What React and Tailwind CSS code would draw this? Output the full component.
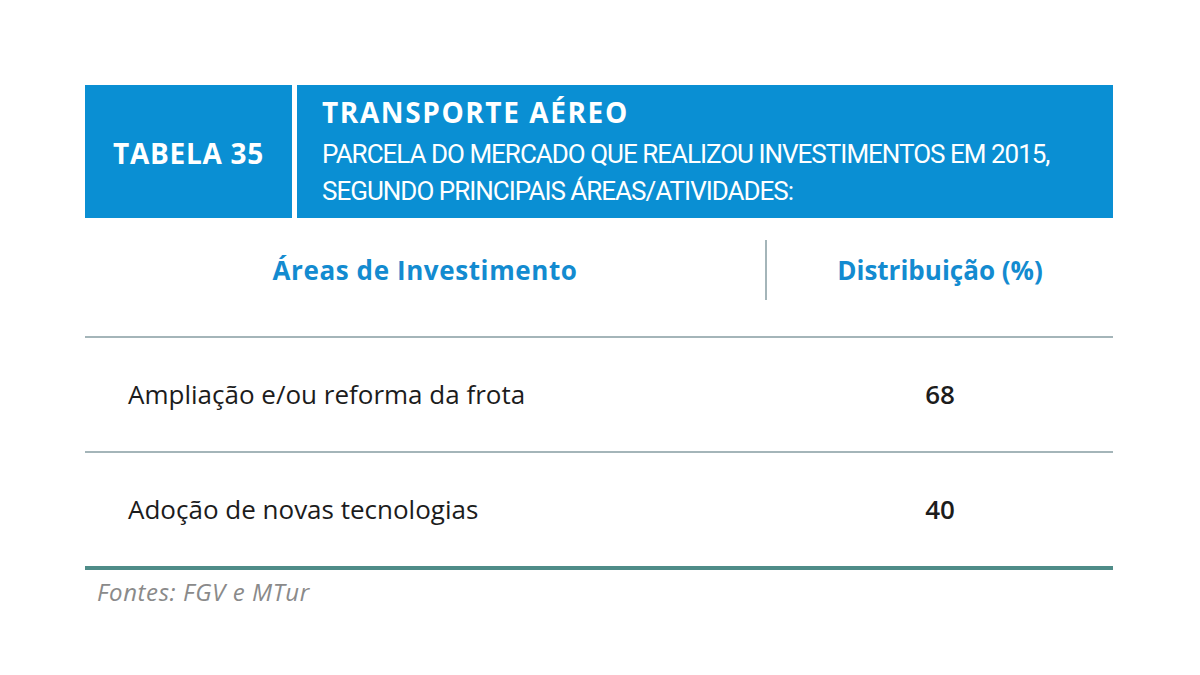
import React from "react";

const rows = [
  { area: "Ampliação e/ou reforma da frota", value: "68" },
  { area: "Adoção de novas tecnologias", value: "40" },
];

const App = () => {
  return (
    <div
      className="w-[1200px] h-[675px] bg-white pt-[85px] pl-[85px]"
      style={{ fontFamily: '"Open Sans", "Noto Sans", sans-serif' }}
    >
      <div className="w-[1028px]">
        {/* faixa azul do título */}
        <div className="flex h-[133px] gap-[5px]">
          <div className="w-[207px] bg-[#0a8fd3] flex items-center justify-center pt-[3px]">
            <span className="text-white font-bold text-[28px] tracking-[0.7px]">
              TABELA 35
            </span>
          </div>
          <div className="flex-1 bg-[#0a8fd3] pl-[25px] pt-[10px] text-white">
            <div className="font-bold text-[28px] leading-[34px] tracking-[1.6px]">
              TRANSPORTE AÉREO
            </div>
            <div
              className="mt-[7px] text-[26px] leading-[37px] tracking-[-1px]"
              style={{ fontFamily: "Roboto, sans-serif" }}
            >
              PARCELA DO MERCADO QUE REALIZOU INVESTIMENTOS EM 2015,
              <br />
              SEGUNDO PRINCIPAIS ÁREAS/ATIVIDADES:
            </div>
          </div>
        </div>

        {/* cabeçalho das colunas */}
        <div className="flex pt-[22px] pb-[36px] border-b-2 border-[#a4b5b9]">
          <div className="w-[682px] h-[60px] flex items-center justify-center border-r-2 border-[#a4b5b9]">
            <span className="text-[#138bd0] font-bold text-[26px] tracking-[0.6px]">
              Áreas de Investimento
            </span>
          </div>
          <div className="flex-1 h-[60px] flex items-center justify-center">
            <span className="text-[#138bd0] font-bold text-[26px]">
              Distribuição (%)
            </span>
          </div>
        </div>

        {rows.map((row, i) => (
          <div
            key={row.area}
            className={
              i === rows.length - 1
                ? "flex items-center h-[117px] border-b-4 border-[#4f8c88]"
                : "flex items-center h-[115px] border-b-2 border-[#a4b5b9]"
            }
          >
            <div className="w-[682px] pl-[43px] text-[26px] font-medium text-[#1c1c1c]">
              {row.area}
            </div>
            <div className="flex-1 text-center text-[26px] font-semibold text-[#1c1c1c]">
              {row.value}
            </div>
          </div>
        ))}

        <div className="pl-[12px] pt-[6px] text-[24px] leading-[32px] italic tracking-[0.6px] text-[#8a8a8a]">
          Fontes: FGV e MTur
        </div>
      </div>
    </div>
  );
};

export default App;
